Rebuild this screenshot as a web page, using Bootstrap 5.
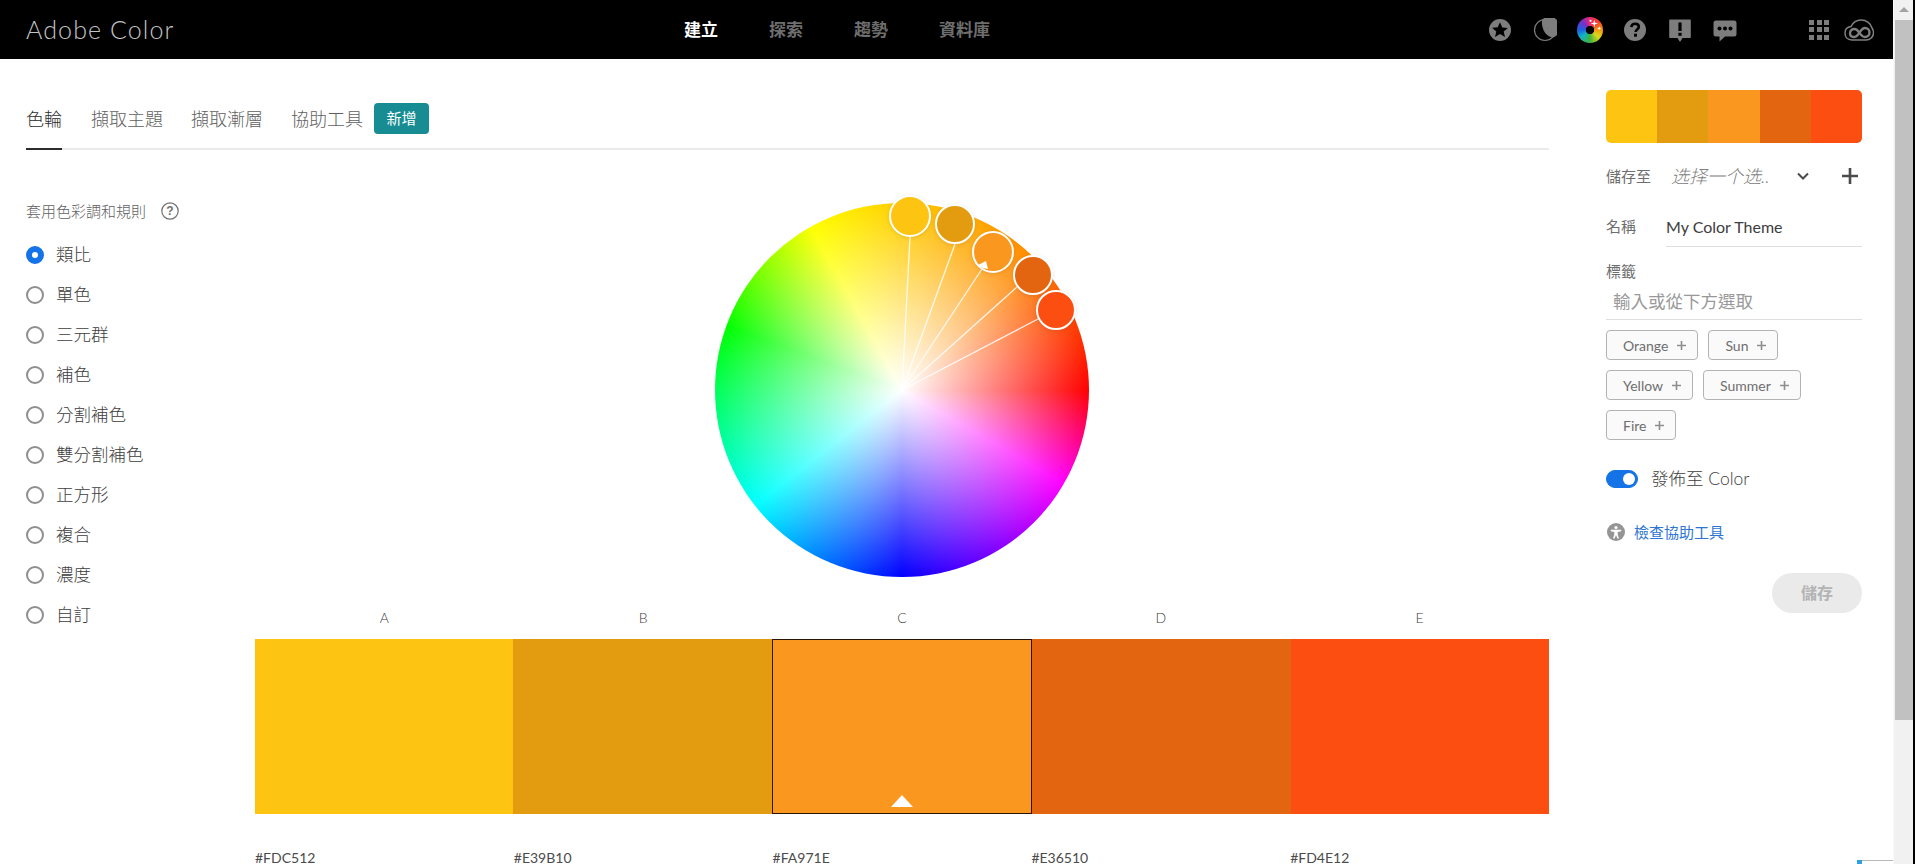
<!DOCTYPE html>
<html lang="zh-Hant">
<head>
    <meta charset="UTF-8">
    <meta name="viewport" content="width=device-width, initial-scale=1.0">
    <title>Adobe Color</title>
    <link href="https://cdn.jsdelivr.net/npm/bootstrap@5.3.2/dist/css/bootstrap.min.css" rel="stylesheet">
    <style>
        body {
            height: 864px;
            overflow: hidden;
            background: #000;
            font-family: "Lato", "Noto Sans CJK TC", sans-serif;
            color: #4b4b4b;
        }
        .page-area { width: 1893px; height: 864px; background: #fff; overflow: hidden; flex: none; }

        /* top bar */
        .top-bar { height: 59px; background: #000; padding: 0 19px 0 26px; flex-wrap: nowrap; }
        .brand-name { width: 658px; padding: 0; margin: 0; font-size: 25px; font-weight: 300; letter-spacing: 1.1px; color: #c4c4c4; }
        .top-links { gap: 51px; }
        .top-links .nav-link { padding: 0; font-size: 17px; font-weight: 700; color: #6e6e6e; line-height: 24px; }
        .top-links .nav-link.active { color: #fff; }
        .top-icons { gap: 21px; }
        .top-icons svg { width: 24px; height: 24px; display: block; }
        .hue-icon {
            position: relative;
            width: 26px;
            height: 26px;
            margin: 0 -1px;
            border-radius: 50%;
            background: radial-gradient(circle, #000 0 4px, transparent 4.5px),
                conic-gradient(#ee2a6c 0deg, #f4402a 45deg, #f59a12 90deg, #d8d81a 130deg, #3fb23a 180deg, #12b6c4 230deg, #1a62e0 270deg, #7a2fc8 320deg, #ee2a6c 360deg);
        }
        .top-icons .hue-icon svg { position: absolute; inset: 0; width: 26px; height: 26px; }
        .apps-grid { width: 20px; height: 20px; display: grid; grid-template-columns: repeat(3, 5px); gap: 2.5px; margin-left: 51px; margin-right: 15px; }
        .apps-grid i { background: #7d7d7d; }
        .top-icons .cc-mark { width: 30px; height: 22px; margin-left: -21px; }

        /* tabs */
        .editor-col { width: 1523px; margin-left: 26px; flex: none; }
        .mode-tabs { margin-top: 44px; height: 47px; border-bottom: 2px solid #eaeaea; flex-wrap: nowrap; gap: 28px; align-items: flex-start; }
        .mode-tabs .nav-item:first-child { margin-right: 1px; }
        .mode-tabs .nav-link { padding: 0; height: 47px; line-height: 32px; font-size: 18px; font-weight: 300; color: #5f5f5f; }
        .mode-tabs .nav-link.active { color: #2c2c2c; border-bottom: 2px solid #2c2c2c; }
        .new-badge { margin-left: -17px; width: 55px; height: 31px; line-height: 31px; padding: 0; font-size: 15px; font-weight: 400; background: #178d93; border-radius: 4px; }

        /* rule list */
        .rule-col { width: 229px; flex: none; }
        .rule-title { margin-top: 50px; margin-bottom: 13px; height: 22px; font-size: 15px; font-weight: 300; line-height: 22px; color: #5f5f5f; }
        .rule-title svg { margin-left: 15px; width: 18px; height: 18px; }
        .rule-item { height: 40px; padding: 0; margin: 0; gap: 12px; }
        .rule-item .form-check-input { width: 18px; height: 18px; margin: 0; float: none; border: 2px solid #8e8e8e; flex: none; }
        .rule-item .form-check-input:checked { background-color: #fff; background-image: none; border: 6px solid #1473e6; }
        .rule-item .form-check-label { font-size: 17.5px; font-weight: 300; color: #3d3d3d; }

        /* wheel */
        .stage-col { width: 1294px; flex: none; }
        .wheel-box {
            position: relative;
            width: 374px;
            height: 374px;
            margin: 53px auto 0;
            border-radius: 50%;
            background: radial-gradient(circle closest-side, #fff 0%, rgba(255,255,255,0) 100%),
                conic-gradient(#ffcc00 0deg, #ff8800 45deg, #ff0000 90deg, #ff00ff 120deg, #0000ff 180deg, #00ffff 232deg, #00ff00 290deg, #ffff00 331deg, #ffcc00 360deg);
        }
        .wheel-box svg { position: absolute; inset: 0; overflow: visible; }
        .wheel-knob { stroke: #fff; stroke-width: 2; filter: drop-shadow(0 1px 2px rgba(0,0,0,.1)); }
        .wheel-spoke { stroke: #fff; stroke-width: 1.3; stroke-opacity: .85; }

        /* swatches */
        .swatch-names { margin-top: 30px; height: 22px; line-height: 22px; font-size: 14px; font-weight: 300; text-align: center; color: #3d3d3d; }
        .swatch-strip { height: 175px; margin-top: 10px; }
        .swatch-cell { flex: 1 1 0; position: relative; }
        .swatch-cell.current { border: 1px solid #2a1505; }
        .swatch-cell.current::after {
            content: "";
            position: absolute;
            left: 50%;
            bottom: 6px;
            margin-left: -11px;
            border-left: 11px solid transparent;
            border-right: 11px solid transparent;
            border-bottom: 12px solid #fff;
        }
        .hex-row { margin-top: 33px; font-size: 14px; line-height: 21px; color: #4b4b4b; }
        .hex-row > div { flex: 1 1 0; }

        /* right panel */
        .side-col { width: 256px; margin-left: 57px; padding-top: 31px; flex: none; }
        .theme-strip { height: 53px; border-radius: 5px; overflow: hidden; }
        .theme-strip div { flex: 1 1 0; }
        .side-label { font-size: 15px; color: #6e6e6e; flex: none; }
        .save-to { height: 30px; margin-top: 18px; }
        .library-pick { width: 103px; margin-left: 20px; font-size: 18px; font-style: italic; font-weight: 300; color: #808080; white-space: nowrap; overflow: hidden; }
        .name-row { height: 38px; margin-top: 18px; }
        .name-row .side-label { margin-top: -3px; }
        .side-input { height: 37px; padding: 0; border: 0; border-bottom: 1px solid #dedede; border-radius: 0; background: transparent; box-shadow: none; }
        .name-input { width: 196px; margin-left: 30px; padding-bottom: 3px; font-size: 16px; color: #3d3d3d; }
        .tag-head { height: 22px; line-height: 22px; margin-top: 13px; }
        .tag-input { margin-top: 1px; padding-left: 7px; font-size: 17.5px; }
        .tag-input::placeholder { color: #999; }
        .tag-list { margin-top: 10px; gap: 10px; }
        .tag-chip {
            height: 30px;
            padding: 0 11px 0 16px;
            gap: 9px;
            font-size: 14px;
            color: #6e6e6e;
            background: #fafafa;
            border: 1px solid #b3b3b3;
            border-radius: 4px;
        }
        .tag-chip svg { width: 9px; height: 9px; }
        .publish-row { height: 24px; margin-top: 27px; padding: 0; gap: 13px; }
        .publish-row .form-check-input { width: 32px; height: 18px; margin: 0; float: none; flex: none; background-color: #1473e6; border-color: #1473e6; }
        .publish-row .form-check-label { font-size: 17.5px; font-weight: 300; color: #3d3d3d; }
        .check-row { height: 24px; margin-top: 29px; gap: 9px; margin-left: 1px; }
        .check-row svg { width: 18px; height: 18px; }
        .check-row a { font-size: 15px; color: #2d75d2; text-decoration: none; }
        .save-btn, .save-btn:disabled { width: 90px; height: 40px; margin-top: 29px; padding: 0; font-size: 16px; font-weight: 700; border: 0; border-radius: 20px; background: #eaeaea; color: #b3b3b3; opacity: 1; }

        /* scrollbar */
        .scroll-rail { width: 20px; height: 864px; background: #f1f1f1; border-left: 1px solid #fafafa; flex: none; }
        .scroll-arrow { height: 20px; padding-top: 7px; }
        .scroll-arrow i { display: block; width: 0; margin: 0 auto; border-left: 5px solid transparent; border-right: 5px solid transparent; border-bottom: 5px solid #a3a3a3; }
        .scroll-thumb { height: 700px; margin-left: 1px; background: #c1c1c1; }

        /* corner of the widget cut by the window */
        .corner-widget { position: fixed; left: 1857px; top: 860px; width: 36px; height: 4px; background: #fff; border-top: 1px solid #b8b8b8; }
        .corner-widget i { display: block; width: 5px; height: 4px; margin-top: -1px; background: #2e9fe0; }
    </style>
</head>
<body class="d-flex">

    <div class="page-area">
        <nav class="navbar top-bar d-flex align-items-center">
            <a class="navbar-brand brand-name" href="#">Adobe Color</a>
            <ul class="nav top-links">
                <li class="nav-item"><a class="nav-link active" href="#">建立</a></li>
                <li class="nav-item"><a class="nav-link" href="#">探索</a></li>
                <li class="nav-item"><a class="nav-link" href="#">趨勢</a></li>
                <li class="nav-item"><a class="nav-link" href="#">資料庫</a></li>
            </ul>
            <div class="d-flex align-items-center top-icons ms-auto">
                <!-- star -->
                <svg viewBox="0 0 24 24"><circle cx="12" cy="12" r="11" fill="#7d7d7d"/><path d="M12 4.2l2.3 5.2 5.6.5-4.2 3.7 1.3 5.5L12 16l-5 2.9 1.3-5.5-4.2-3.7 5.6-.5z" fill="#000"/></svg>
                <!-- moon -->
                <svg viewBox="0 0 24 24"><circle cx="12" cy="12" r="10.5" fill="none" stroke="#7d7d7d" stroke-width="1.2"/><path d="M9 1.700A10.700 10.700 0 1 1 20 19.500C13 19 8 11 9 1.700z" fill="#7d7d7d"/></svg>
                <!-- colour wheel -->
                <div class="hue-icon">
                    <svg viewBox="0 0 24 24" fill="#fff"><path d="M16 2.500l.8 2.700 2.700.8-2.700.8-.8 2.700-.8-2.700-2.700-.8 2.700-.8z"/><path d="M20.500 8.500l.5 1.500 1.500.5-1.500.5-.5 1.500-.5-1.500-1.500-.5 1.500-.5z"/><circle cx="12.500" cy="3.500" r="1"/></svg>
                </div>
                <!-- help -->
                <svg viewBox="0 0 24 24"><circle cx="12" cy="12" r="11" fill="#7d7d7d"/><path d="M8.300 9.200C8.500 6.900 10 5.700 12.100 5.700c2.200 0 3.700 1.300 3.700 3.100 0 2.600-3.200 2.800-3.200 5.200" fill="none" stroke="#000" stroke-width="2.600"/><rect x="11" y="15.700" width="3" height="3" fill="#000"/></svg>
                <!-- feedback -->
                <svg viewBox="0 0 24 24"><path d="M2 1.500h20a.8.8 0 0 1 .8.8v17a.8.8 0 0 1-.8.8h-7.500L12 24l-2.500-3.900H2a.8.8 0 0 1-.8-.8v-17a.8.8 0 0 1 .8-.8z" fill="#7d7d7d"/><rect x="10.400" y="4.500" width="3.200" height="8.500" fill="#000"/><rect x="10.400" y="14.800" width="3.200" height="3" fill="#000"/></svg>
                <!-- chat -->
                <svg viewBox="0 0 24 24"><path d="M3 2.500h18a2.500 2.500 0 0 1 2.500 2.500v11a2.500 2.500 0 0 1-2.500 2.500H12L6.500 23.500v-5H3A2.500 2.500 0 0 1 .5 16V5A2.500 2.500 0 0 1 3 2.500z" fill="#7d7d7d"/><circle cx="6.500" cy="10.500" r="2" fill="#000"/><circle cx="12" cy="10.500" r="2" fill="#000"/><circle cx="17.500" cy="10.500" r="2" fill="#000"/></svg>
                <div class="apps-grid">
                    <i></i><i></i><i></i><i></i><i></i><i></i><i></i><i></i><i></i>
                </div>
                <!-- creative cloud -->
                <svg class="cc-mark" viewBox="0 0 30 22" fill="none" stroke="#808080"><path d="M8 21C3 21 1 17.500 1 14 1 10.500 3.500 8 7 7.500 9 3.500 12.500 1 17 1c5.500 0 10 3.500 11 8 1.300 1.800 1.500 3.500 1.500 5 0 4-3.500 7-7.500 7z" stroke-width="1.500"/><path d="M6 14.500C6 11.500 8 10 10.500 10 15 10 16 18 21 18c2.500 0 4.500-2 4.500-4.500S23.500 9 21 9c-5 0-6 9-10.500 9C8 18 6 17 6 14.500z" stroke-width="2.400"/></svg>
            </div>
        </nav>

        <div class="d-flex">
            <div class="editor-col">
                <ul class="nav mode-tabs">
                    <li class="nav-item"><a class="nav-link active" href="#">色輪</a></li>
                    <li class="nav-item"><a class="nav-link" href="#">擷取主題</a></li>
                    <li class="nav-item"><a class="nav-link" href="#">擷取漸層</a></li>
                    <li class="nav-item"><a class="nav-link" href="#">協助工具</a></li>
                    <li class="nav-item"><span class="badge new-badge">新增</span></li>
                </ul>

                <div class="d-flex">
                    <div class="rule-col">
                        <div class="d-flex align-items-center rule-title">套用色彩調和規則
                            <svg viewBox="0 0 18 18"><circle cx="9" cy="9" r="8.200" fill="none" stroke="#707070" stroke-width="1.200"/><text x="9" y="13" text-anchor="middle" font-size="12" font-weight="700" font-family="Liberation Sans, sans-serif" fill="#707070">?</text></svg>
                        </div>
                        <div class="form-check d-flex align-items-center rule-item"><input class="form-check-input" type="radio" name="rule" id="r1" checked><label class="form-check-label" for="r1">類比</label></div>
                        <div class="form-check d-flex align-items-center rule-item"><input class="form-check-input" type="radio" name="rule" id="r2"><label class="form-check-label" for="r2">單色</label></div>
                        <div class="form-check d-flex align-items-center rule-item"><input class="form-check-input" type="radio" name="rule" id="r3"><label class="form-check-label" for="r3">三元群</label></div>
                        <div class="form-check d-flex align-items-center rule-item"><input class="form-check-input" type="radio" name="rule" id="r4"><label class="form-check-label" for="r4">補色</label></div>
                        <div class="form-check d-flex align-items-center rule-item"><input class="form-check-input" type="radio" name="rule" id="r5"><label class="form-check-label" for="r5">分割補色</label></div>
                        <div class="form-check d-flex align-items-center rule-item"><input class="form-check-input" type="radio" name="rule" id="r6"><label class="form-check-label" for="r6">雙分割補色</label></div>
                        <div class="form-check d-flex align-items-center rule-item"><input class="form-check-input" type="radio" name="rule" id="r7"><label class="form-check-label" for="r7">正方形</label></div>
                        <div class="form-check d-flex align-items-center rule-item"><input class="form-check-input" type="radio" name="rule" id="r8"><label class="form-check-label" for="r8">複合</label></div>
                        <div class="form-check d-flex align-items-center rule-item"><input class="form-check-input" type="radio" name="rule" id="r9"><label class="form-check-label" for="r9">濃度</label></div>
                        <div class="form-check d-flex align-items-center rule-item"><input class="form-check-input" type="radio" name="rule" id="r10"><label class="form-check-label" for="r10">自訂</label></div>
                    </div>

                    <div class="stage-col">
                        <div class="wheel-box">
                            <svg viewBox="0 0 374 374">
                                <line class="wheel-spoke" x1="187" y1="187" x2="195" y2="34"/>
                                <line class="wheel-spoke" x1="187" y1="187" x2="240" y2="41"/>
                                <line class="wheel-spoke" x1="187" y1="187" x2="267" y2="66"/>
                                <line class="wheel-spoke" x1="187" y1="187" x2="302" y2="84"/>
                                <line class="wheel-spoke" x1="187" y1="187" x2="323" y2="116"/>
                                <circle class="wheel-knob" cx="195" cy="13" r="20" fill="#FDC512"/>
                                <circle class="wheel-knob" cx="240" cy="21" r="19" fill="#E39B10"/>
                                <circle class="wheel-knob" cx="278" cy="49" r="20" fill="#FA971E"/>
                                <polygon points="263,62 271,58 273,66 267,65" fill="#fff"/>
                                <circle class="wheel-knob" cx="318" cy="72" r="19" fill="#E36510"/>
                                <circle class="wheel-knob" cx="341" cy="107" r="19" fill="#FD4E12"/>
                            </svg>
                        </div>
                        <div class="d-flex swatch-names">
                            <div class="flex-fill w-100">A</div><div class="flex-fill w-100">B</div><div class="flex-fill w-100">C</div><div class="flex-fill w-100">D</div><div class="flex-fill w-100">E</div>
                        </div>
                        <div class="d-flex swatch-strip">
                            <div class="swatch-cell" style="background:#FDC512"></div>
                            <div class="swatch-cell" style="background:#E39B10"></div>
                            <div class="swatch-cell current" style="background:#FA971E"></div>
                            <div class="swatch-cell" style="background:#E36510"></div>
                            <div class="swatch-cell" style="background:#FD4E12"></div>
                        </div>
                        <div class="d-flex hex-row">
                            <div>#FDC512</div><div>#E39B10</div><div>#FA971E</div><div>#E36510</div><div>#FD4E12</div>
                        </div>
                    </div>
                </div>
            </div>

            <div class="side-col">
                <div class="d-flex theme-strip">
                    <div style="background:#FDC512"></div>
                    <div style="background:#E39B10"></div>
                    <div style="background:#FA971E"></div>
                    <div style="background:#E36510"></div>
                    <div style="background:#FD4E12"></div>
                </div>
                <div class="d-flex align-items-center save-to">
                    <span class="side-label">儲存至</span>
                    <span class="library-pick">选择一个选..</span>
                    <svg class="ms-auto" style="margin-right:33px" width="12" height="8" viewBox="0 0 12 8"><path d="M1 1.500l5 5 5-5" fill="none" stroke="#4b4b4b" stroke-width="2"/></svg>
                    <svg style="margin-right:4px" width="16" height="16" viewBox="0 0 16 16"><path d="M8 0v16M0 8h16" stroke="#4b4b4b" stroke-width="2.600"/></svg>
                </div>
                <div class="d-flex align-items-center name-row">
                    <span class="side-label">名稱</span>
                    <input class="form-control side-input name-input" type="text" value="My Color Theme">
                </div>
                <div class="side-label tag-head">標籤</div>
                <input class="form-control side-input tag-input" type="text" placeholder="輸入或從下方選取">
                <div class="d-flex flex-wrap tag-list">
                    <span class="d-inline-flex align-items-center tag-chip">Orange<svg viewBox="1 1 9 9"><path d="M5.500 1v9M1 5.500h9" stroke="#8e8e8e" stroke-width="1.600"/></svg></span>
                    <span class="d-inline-flex align-items-center tag-chip">Sun<svg viewBox="1 1 9 9"><path d="M5.500 1v9M1 5.500h9" stroke="#8e8e8e" stroke-width="1.600"/></svg></span>
                    <span class="d-inline-flex align-items-center tag-chip">Yellow<svg viewBox="1 1 9 9"><path d="M5.500 1v9M1 5.500h9" stroke="#8e8e8e" stroke-width="1.600"/></svg></span>
                    <span class="d-inline-flex align-items-center tag-chip">Summer<svg viewBox="1 1 9 9"><path d="M5.500 1v9M1 5.500h9" stroke="#8e8e8e" stroke-width="1.600"/></svg></span>
                    <span class="d-inline-flex align-items-center tag-chip">Fire<svg viewBox="1 1 9 9"><path d="M5.500 1v9M1 5.500h9" stroke="#8e8e8e" stroke-width="1.600"/></svg></span>
                </div>
                <div class="form-check form-switch d-flex align-items-center publish-row">
                    <input class="form-check-input" type="checkbox" role="switch" id="publish" checked>
                    <label class="form-check-label" for="publish">發佈至 Color</label>
                </div>
                <div class="d-flex align-items-center check-row">
                    <svg viewBox="0 0 18 18"><circle cx="9" cy="9" r="9" fill="#959595"/><circle cx="9" cy="4.500" r="1.600" fill="#fff"/><path d="M3.800 6.800h10.400v1.500l-3.500.7v2.500l1.300 4h-1.600L9 12l-1.400 3.500H6l1.300-4V9l-3.500-.7z" fill="#fff"/></svg>
                    <a href="#">檢查協助工具</a>
                </div>
                <div class="d-flex justify-content-end">
                    <button class="btn save-btn" type="button" disabled>儲存</button>
                </div>
            </div>
        </div>
    </div>

    <div class="scroll-rail">
        <div class="scroll-arrow"><i></i></div>
        <div class="scroll-thumb"></div>
    </div>

    <div class="corner-widget"><i></i></div>

    <script src="https://cdn.jsdelivr.net/npm/bootstrap@5.3.2/dist/js/bootstrap.bundle.min.js"></script>
</body>
</html>
